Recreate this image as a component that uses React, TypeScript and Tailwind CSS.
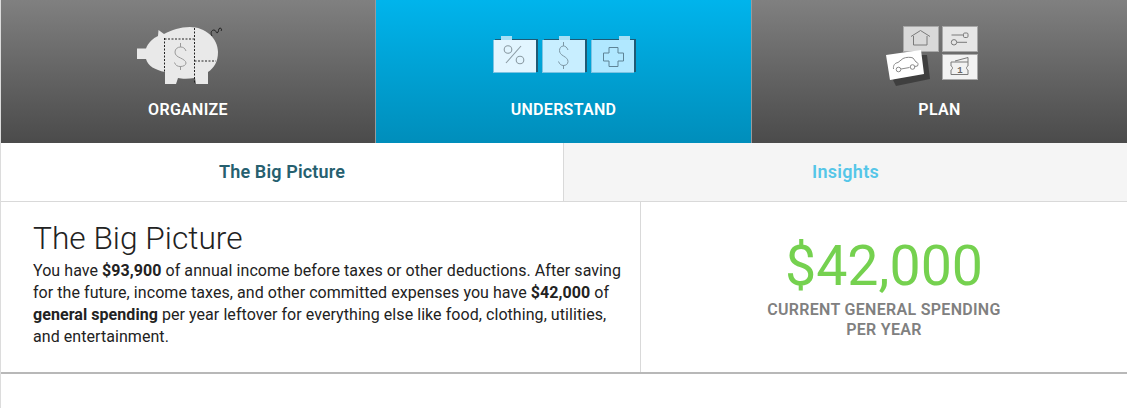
const plex = 'font-["Roboto",sans-serif]';

function PigIcon() {
  return (
    <svg width="102" height="65" viewBox="137 25 102 65" className="block">
      <path
        d="M137 48.500H146C148 43 153 38 158 36L158.500 30L164 34C172 30 180 27 190 27C205 27 218 38 218 52C218 62 214 68 208 72V84H196L195 78C188 79 182 79 178 78L176 84H165V72C155 70 148 66 146 59H137Z"
        fill="#e9e9e9"
      />
      <path d="M164.500 38V72M164.500 39H194M194.500 28V84M194.500 61H216" fill="none" stroke="#222" strokeWidth="1" strokeDasharray="2 1.500" />
      <path
        d="M186 51C185 48 183 47 180.500 47C177.500 47 175 49 175 52C175 55 177 56.500 180.500 58C183.500 59.500 186 61 186 63C186 65 183.500 66.500 180.500 66.500C177.500 66.500 175.500 65.500 174.500 62.500M180.500 43V47M180.500 66V70"
        fill="none"
        stroke="#9a9a9a"
        strokeWidth="1"
      />
      <path d="M212 36C210 32 212 30 214 30C216 30 216 33 217 33C219 33 218 28 220 28C221.500 28 222 30 221 31" fill="none" stroke="#222" strokeWidth="1" />
    </svg>
  );
}

function Folder({ bg, tab, children }: { bg: string; tab: string; children: React.ReactNode }) {
  return (
    <div className={`relative w-[43px] h-[33px] border-b border-l border-[#7cc3e2] shadow-[2px_-1px_0_#1f5a75] ${bg}`}>
      <div className={`absolute top-[-4px] w-[11px] h-[4px] bg-[#a6dff5] ${tab}`} />
      <svg width="42" height="32" viewBox="0 0 42 32" className="block">{children}</svg>
    </div>
  );
}

function FoldersIcon() {
  return (
    <div className="flex gap-[6px] h-[37px] items-end">
      <Folder bg="bg-[#e2f5ff]" tab="left-[7px]">
        <path d="M12 23 27 6" fill="none" stroke="#8a9aa3" strokeWidth="1.100" />
        <circle cx="14" cy="9.500" r="3.800" fill="none" stroke="#8a9aa3" strokeWidth="1.100" />
        <circle cx="26" cy="20" r="3.800" fill="none" stroke="#8a9aa3" strokeWidth="1.100" />
      </Folder>
      <Folder bg="bg-[#c8eeff]" tab="left-[16px]">
        <path d="M25 10C24 7 22 6 20.500 6C18 6 16.500 8 16.500 10.500C16.500 13 18 14.500 20.500 16C23 17.500 25 19 25 21.500C25 24 23 25.500 20.500 25.500C18 25.500 16.500 24 15.500 21.500M20.500 2V6M20.500 25V29" fill="none" stroke="#7d97a5" strokeWidth="1" />
      </Folder>
      <Folder bg="bg-[#b1e8ff]" tab="left-[27px]">
        <path d="M17 7.500H26V13H31.500V21H26V26.500H17V21H11.500V13H17Z" fill="none" stroke="#5e8496" strokeWidth="1" />
      </Folder>
    </div>
  );
}

function PlanIcon() {
  return (
    <svg width="109" height="65" viewBox="885 25 109 65" className="block">
      <rect x="903.500" y="26.500" width="35" height="25" fill="#d9d9d9" stroke="#a8a8a8" />
      <path d="M911 36.500 920.500 30.500 930 36.500M913.500 36V45H927V36" fill="none" stroke="#7a7a7a" />
      <rect x="942.500" y="26.500" width="35" height="25" fill="#e6e6e6" stroke="#a8a8a8" />
      <path d="M951.500 35H963M957 42.300H967" stroke="#7a7a7a" fill="none" />
      <rect x="963.500" y="33" width="4.500" height="4.500" rx="1.200" fill="none" stroke="#7a7a7a" />
      <circle cx="954" cy="42.300" r="2.700" fill="none" stroke="#7a7a7a" />
      <rect x="942.500" y="54.500" width="35" height="25" fill="#f2f2f2" stroke="#a8a8a8" />
      <path d="M951 62H968V66C966 67 966 69 968 70V74.500H951V70C953 69 953 67 951 66ZM955 61 968 57.500V62" fill="none" stroke="#7a7a7a" />
      <text x="960" y="72.500" fontSize="9" fontWeight="700" fill="#666" textAnchor="middle" fontFamily="Liberation Mono">1</text>
      <path d="M921 55H927L930 79 896 86 893 80Z" fill="#3f3f3f" />
      <path d="M886 55 921 50 924 74 890 80Z" fill="#fff" />
      <path d="M893.500 69C893 65 895 63 898 62.500L903 58.500C906 57 911 57 913 58L916 62C918 62.500 918.500 64 917.500 66L914.500 66.500M909.500 67.500 901 69" fill="none" stroke="#8a8a8a" />
      <circle cx="898.500" cy="69.500" r="2.300" fill="#fff" stroke="#8a8a8a" />
      <circle cx="912.500" cy="67" r="2.300" fill="#fff" stroke="#8a8a8a" />
    </svg>
  );
}

function NavTab({ label, active, children, className }: { label: string; active?: boolean; children: React.ReactNode; className: string }) {
  return (
    <div className={`flex flex-col items-center ${active ? "bg-gradient-to-b from-[#00b4ec] to-[#008ebb]" : "bg-gradient-to-b from-[#808080] to-[#4b4b4b]"} ${className}`}>
      <div className="h-[90px] flex items-end justify-center">{children}</div>
      <div className="mt-[8px] pt-[1px] text-[16px] leading-[22px] font-semibold tracking-[0.3px] text-white">{label}</div>
    </div>
  );
}

export default function App() {
  return (
    <div className={`w-[1127px] h-[408px] bg-white overflow-hidden border-l border-[#dcdcdc] ${plex}`}>
      <div className="flex h-[143px]">
        <NavTab label="ORGANIZE" className="w-[374px]">
          <PigIcon />
        </NavTab>
        <NavTab label="UNDERSTAND" active className="w-[377px] border-x border-[#9a9a9a]">
          <div className="pb-[17px]"><FoldersIcon /></div>
        </NavTab>
        <NavTab label="PLAN" className="flex-1">
          <PlanIcon />
        </NavTab>
      </div>
      <div className="flex h-[59px] border-b border-[#d9d9d9]">
        <div className="w-[562px] pb-[2px] flex items-center justify-center text-[18px] font-semibold tracking-[0.15px] text-[#26606f]">The Big Picture</div>
        <div className="flex-1 pb-[2px] flex items-center justify-center bg-[#f5f5f5] border-l border-[#d9d9d9] text-[18px] font-semibold tracking-[0.3px] text-[#55c6e8]">Insights</div>
      </div>
      <div className="flex h-[172px] border-b-2 border-[#b8b8b8]">
        <div className="w-[640px] border-r border-[#d9d9d9] pl-[32px] pr-[16px] pt-[19px]">
          <h1 className="text-[31.700px] leading-[36px] font-light text-[#222]">The Big Picture</h1>
          <p className="mt-[3px] text-[16px] leading-[22px] tracking-[0.06px] text-[#222] whitespace-nowrap">
            You have <b>$93,900</b> of annual income before taxes or other deductions. After saving<br />
            for the future, income taxes, and other committed expenses you have <b>$42,000</b> of<br />
            <b>general spending</b> per year leftover for everything else like food, clothing, utilities,<br />
            and entertainment.
          </p>
        </div>
        <div className="flex-1 flex flex-col items-center pt-[32px]">
          <div className="text-[55.500px] leading-[66px] text-[#75d14f]">$42,000</div>
          <div className="text-[16px] leading-[20px] font-semibold tracking-[0.3px] text-[#808080] text-center">
            CURRENT GENERAL SPENDING<br />PER YEAR
          </div>
        </div>
      </div>
    </div>
  );
}
